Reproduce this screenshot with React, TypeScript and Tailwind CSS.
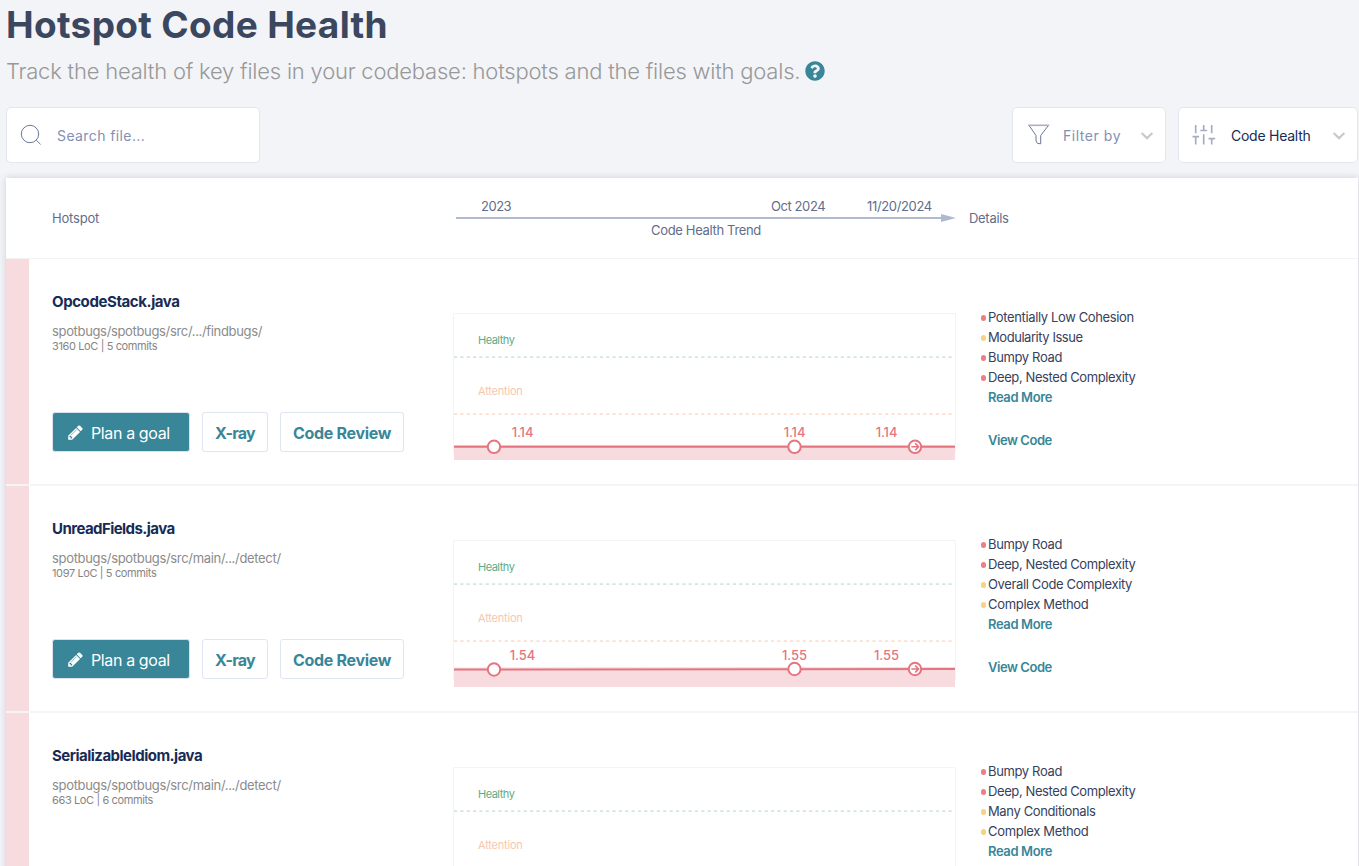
import { FaQuestionCircle } from "react-icons/fa";

type Severity = "bad" | "warn";
type Line = { text: string; track: string; severity: Severity };
type Hotspot = {
  name: string;
  nameTrack: string;
  path: string;
  pathTrack: string;
  stats: string;
  left: number;
  right: number;
  scores: string[];
  lines: Line[];
};

const bumpy: Line = { text: "Bumpy Road", track: "tracking-[-0.36px]", severity: "bad" };
const nested: Line = { text: "Deep, Nested Complexity", track: "tracking-[-0.4px]", severity: "bad" };
const complexMethod: Line = { text: "Complex Method", track: "tracking-[-0.31px]", severity: "warn" };

const hotspots: Hotspot[] = [
  {
    name: "OpcodeStack.java",
    nameTrack: "tracking-[-0.41px]",
    path: "spotbugs/spotbugs/src/.../findbugs/",
    pathTrack: "tracking-[-0.34px]",
    stats: "3160 LoC | 5 commits",
    left: 133.8,
    right: 133.8,
    scores: ["1.14", "1.14", "1.14"],
    lines: [
      { text: "Potentially Low Cohesion", track: "tracking-[-0.37px]", severity: "bad" },
      { text: "Modularity Issue", track: "tracking-[-0.45px]", severity: "warn" },
      bumpy,
      nested,
    ],
  },
  {
    name: "UnreadFields.java",
    nameTrack: "tracking-[-0.56px]",
    path: "spotbugs/spotbugs/src/main/.../detect/",
    pathTrack: "tracking-[-0.32px]",
    stats: "1097 LoC | 5 commits",
    left: 129.5,
    right: 129,
    scores: ["1.54", "1.55", "1.55"],
    lines: [
      bumpy,
      nested,
      { text: "Overall Code Complexity", track: "tracking-[-0.36px]", severity: "warn" },
      complexMethod,
    ],
  },
  {
    name: "SerializableIdiom.java",
    nameTrack: "tracking-[-0.51px]",
    path: "spotbugs/spotbugs/src/main/.../detect/",
    pathTrack: "tracking-[-0.32px]",
    stats: "663 LoC | 6 commits",
    left: 130,
    right: 130,
    scores: [],
    lines: [
      bumpy,
      nested,
      { text: "Many Conditionals", track: "tracking-[-0.37px]", severity: "warn" },
      complexMethod,
    ],
  },
];

function SearchIcon() {
  return (
    <svg width="24" height="24" viewBox="0 0 24 24" fill="none" stroke="#5d6a8c" strokeWidth="0.9">
      <circle cx="11" cy="11" r="8.7" />
      <path d="M17.2 17 21.6 21.4" />
    </svg>
  );
}

function FunnelIcon() {
  return (
    <svg width="24" height="24" viewBox="0 0 24 24" fill="none">
      <path d="M2 2.4 9 12.5V18l1.6 2.4 3.1.4v-8.3L21.5 2.4" stroke="#6c7794" strokeWidth="1" />
      <path d="M1.3 2.3h21" stroke="#a9b1c9" strokeWidth="1.6" />
    </svg>
  );
}

function SlidersIcon() {
  return (
    <svg width="26" height="24" viewBox="0 0 26 24" fill="none" stroke="#a6aec6" strokeWidth="1.7">
      <path d="M4.7 2v8.3M4.7 13.7v7.8M12.7 2v5.5M12.7 11.3v10.2M20.7 2v8.3M20.7 15.7v5.8" />
      <path d="M1.5 13.7h6.6M9.3 7.5h6.8M17.5 15.7h6.6" />
    </svg>
  );
}

function PencilIcon() {
  return (
    <svg width="17" height="17" viewBox="0 0 1792 1792" fill="currentColor" className="mr-[7px] shrink-0">
      <path d="M491 1536l91-91-235-235-91 91v107h128v128h107zm523-928q0-22-22-22-10 0-17 7l-542 542q-7 7-7 17 0 22 22 22 10 0 17-7l542-542q7-7 7-17zm-54-192l416 416-832 832h-416v-416zm683 96q0 53-37 90l-166 166-416-416 166-165q36-38 90-38 53 0 91 38l235 234q37 39 37 91z" />
    </svg>
  );
}

function Chevron() {
  return (
    <svg
      width="14"
      height="10"
      viewBox="0 0 14 10"
      fill="none"
      stroke="#cacaca"
      strokeWidth="2.3"
      className="mt-px shrink-0"
    >
      <path d="M1.6 2 7 7.2 12.4 2" />
    </svg>
  );
}

function TrendChart({ spot }: { spot: Hotspot }) {
  const { left, right, scores } = spot;
  const points = [41, 341.5, 462];
  const labels = [69.5, 341.5, 433.5];
  return (
    <svg width="503" height="147" viewBox="0 0 503 147" className="block font-['Inter',sans-serif]">
      <path d="M.5 140V.5h502V140" fill="none" stroke="#f3f4f5" />
      <path d="M1 44.2h499" stroke="#cfe8e2" strokeWidth="1.7" strokeDasharray="3.17 3.17" />
      <path d="M1 101.2h499" stroke="#fddfd0" strokeWidth="1.7" strokeDasharray="3.17 3.17" />
      <path d={`M1 ${left}L502 ${right}V147H1Z`} fill="#f8dbde" />
      <path d={`M1 ${left - 1.4}L502 ${right - 1.4}`} stroke="#f5d5d7" strokeWidth="1" />
      <path d={`M1 ${left}L502 ${right}`} stroke="#e5747f" strokeWidth="2" />
      {points.map((x) => (
        <circle key={x} cx={x} cy={x < 100 ? left : right} r="6.2" fill="#fff" stroke="#e5747f" strokeWidth="2" />
      ))}
      <path
        d={`M458.3 ${right}h7M462.2 ${right - 3.4}l3.4 3.4-3.4 3.4`}
        fill="none"
        stroke="#e5747f"
        strokeWidth="1.6"
      />
      <text x="25" y="31" fontSize="11" letterSpacing="-0.5" fill="#5cab85">Healthy</text>
      <text x="25" y="82" fontSize="11" letterSpacing="-0.2" fill="#f8c6af">Attention</text>
      {scores.map((score, i) => (
        <text
          key={i}
          x={labels[i]}
          y={(i === 0 ? left : right) - 9.5}
          fontSize="13"
          fontWeight="500"
          textAnchor="middle"
          letterSpacing="-0.1"
          fill="#e5747f"
        >
          {score}
        </text>
      ))}
    </svg>
  );
}

function HotspotRow({ spot }: { spot: Hotspot }) {
  return (
    <div className="flex h-[227px] shrink-0 border-b-2 border-[#f5f5f6]">
      <div className="w-[23px] shrink-0 bg-[#f8dbde]" />
      <div className="flex w-[424px] shrink-0 flex-col pt-[33px] pl-[23px]">
        <h2 className={`text-[15px] leading-5 font-bold text-[#172b55] ${spot.nameTrack}`}>{spot.name}</h2>
        <p className={`mt-[10px] text-[13px] leading-[18px] text-[#8b8b8b] ${spot.pathTrack}`}>{spot.path}</p>
        <p className="text-[11px] leading-3 tracking-[-0.38px] text-[#858585]">{spot.stats}</p>
        <div className="mt-[60px] flex h-10 gap-3 text-base">
          <button className="flex w-[138px] items-center rounded-[3px] border border-[#d9e2ee] bg-[#388697] pt-px pl-[14px] tracking-[-0.38px] whitespace-nowrap text-white">
            <PencilIcon />
            Plan a goal
          </button>
          <button className="w-[66px] rounded-[3px] border border-[#dfe5f2] pt-px font-bold tracking-[-0.7px] text-[#388697]">
            X-ray
          </button>
          <button className="w-[124px] rounded-[3px] border border-[#dfe5f2] pt-px font-bold tracking-[-0.3px] text-[#388697]">
            Code Review
          </button>
        </div>
      </div>
      <div className="shrink-0 pt-[54px]">
        <TrendChart spot={spot} />
      </div>
      <div className="flex flex-col pt-12 pl-6 text-[13px] leading-5 text-[#37415c]">
        {spot.lines.map((line) => (
          <div key={line.text} className="flex items-center">
            <span
              className={`mt-0.5 mr-0.5 ml-[0.5px] size-[5.5px] rounded-full ${line.severity === "bad" ? "bg-[#ee7d8c]" : "bg-[#f6d283]"}`}
            />
            <span className={line.track}>{line.text}</span>
          </div>
        ))}
        <a className="pl-2 font-semibold tracking-[-0.38px] text-[#388697]">Read More</a>
        <a className="mt-[23px] pl-2 font-semibold tracking-[-0.44px] text-[#388697]">View Code</a>
      </div>
    </div>
  );
}

export default function App() {
  return (
    <div className="h-[866px] overflow-hidden bg-[#f2f4f8] pr-px pl-1.5 font-['Inter',sans-serif]">
      <h1 className="h-[50px] text-[37px] leading-[50px] font-bold tracking-[0.33px] whitespace-nowrap text-[#3b465f]">
        Hotspot Code Health
      </h1>
      <p className="mt-1 flex h-[34px] items-center text-[22px] font-light tracking-[-0.215px] whitespace-nowrap text-[#989898]">
        Track the health of key files in your codebase: hotspots and the files with goals.
        <FaQuestionCircle className="ml-[5px] size-5 text-[#388697]" />
      </p>

      <div className="mt-[19px] flex h-14 text-sm">
        <div className="flex w-[254px] items-center rounded-[5px] border border-[#e1e6f0] bg-white pl-3 text-[#8390b4]">
          <SearchIcon />
          <span className="pt-px pl-3.5 tracking-[0.4px]">Search file...</span>
        </div>
        <div className="ml-auto flex w-[154px] items-center rounded-[5px] border border-[#e1e6f0] bg-white pl-3.5 text-[#8390b4]">
          <FunnelIcon />
          <span className="w-[89px] pt-px pl-3 tracking-[0.54px] whitespace-nowrap">Filter by</span>
          <Chevron />
        </div>
        <div className="ml-3 flex w-[180px] items-center rounded-[5px] border border-[#e1e6f0] bg-white pl-3 text-[#172b55]">
          <SlidersIcon />
          <span className="w-[115px] pt-px pl-3.5 tracking-[-0.25px] whitespace-nowrap">Code Health</span>
          <Chevron />
        </div>
      </div>

      <main className="mt-[15px] flex h-[720px] flex-col bg-white shadow-[0_0_7px_rgba(20,25,45,0.17)]">
        <div className="flex h-[81px] shrink-0 border-b border-[#f3f3f4] text-[13px] leading-[18px] text-[#616d8c]">
          <div className="w-[450px] shrink-0 pt-[31px] pl-[46px] tracking-[-0.2px]">Hotspot</div>
          <div className="w-[500px] shrink-0 pt-[19px]">
            <div className="flex h-[17px] tracking-[-0.5px] whitespace-nowrap">
              <span className="w-[290px] pl-[25px]">2023</span>
              <span className="w-24 pl-[25px] tracking-[-0.42px]">Oct 2024</span>
              <span className="pl-[25px] tracking-[-0.35px]">11/20/2024</span>
            </div>
            <svg width="500" height="8" viewBox="0 0 500 8" fill="#b0b9ce" className="block">
              <path d="M0 3h485V0l15 4-15 4V5H0Z" />
            </svg>
            <div className="-mt-px text-center tracking-[-0.34px]">Code Health Trend</div>
          </div>
          <div className="pt-[31px] pl-[13px] tracking-[-0.3px]">Details</div>
        </div>
        {hotspots.map((spot) => (
          <HotspotRow key={spot.name} spot={spot} />
        ))}
      </main>
    </div>
  );
}
